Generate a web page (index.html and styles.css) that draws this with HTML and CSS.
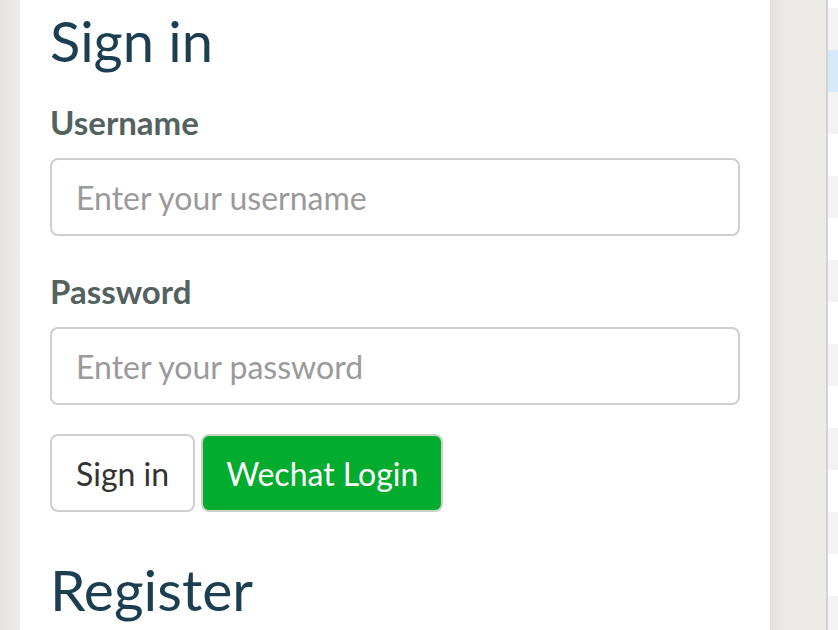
FILE: index.html
```html
<!DOCTYPE html>
<html lang="en">
<head>
    <meta charset="UTF-8">
    <meta name="viewport" content="width=device-width, initial-scale=1.0">
    <title>Sign in</title>
    <link rel="stylesheet" href="styles.css">
</head>
<body>
    <div class="layout">
        <div class="side-left"></div>

        <main class="panel">
            <h2 class="title">Sign in</h2>
            <form class="login-form">
                <label class="field-label" for="username">Username</label>
                <input type="text" id="username" class="field-input" placeholder="Enter your username">

                <label class="field-label field-label-second" for="password">Password</label>
                <input type="password" id="password" class="field-input" placeholder="Enter your password">

                <div class="actions">
                    <button type="submit" class="btn">Sign in</button>
                    <button type="button" class="btn btn-wechat">Wechat Login</button>
                </div>
            </form>
            <h2 class="title title-register">Register</h2>
        </main>

        <div class="side-right"></div>

        <!-- liste en arrière-plan -->
        <div class="list-strip">
            <div class="row row-top"></div>
            <div class="row odd"></div>
            <div class="row active"></div>
            <div class="row odd"></div>
            <div class="row"></div>
            <div class="row odd"></div>
            <div class="row"></div>
            <div class="row odd"></div>
            <div class="row"></div>
            <div class="row odd"></div>
            <div class="row"></div>
            <div class="row odd"></div>
            <div class="row"></div>
            <div class="row odd"></div>
            <div class="row"></div>
            <div class="row odd"></div>
        </div>
    </div>
</body>
</html>
```

FILE: styles.css
```css
body {
    margin: 0;
    padding: 0;
    font-family: Lato, "Open Sans", sans-serif;
    background: #fff;
    height: 630px;
    overflow: hidden;
}

.layout {
    display: grid;
    grid-template-columns: 20px 750px 56px 2px 10px;
    height: 630px;
}

.side-left {
    background: linear-gradient(to right, #e6e4e0, #eeedea);
}

.panel {
    background: #fff;
    padding: 7px 30px 0;
}

.side-right {
    background: linear-gradient(to right, #e3e2de, #ebeae7 30%, #ebeae7);
    border-right: 2px solid #d3d2d0;
    grid-column: span 2;
}

.title {
    margin: 0;
    font-size: 56px;
    font-weight: 400;
    line-height: 67px;
    color: #1b3f51;
}

.title-register {
    margin-top: 44px;
    font-size: 57px;
}

.login-form {
    display: flex;
    flex-direction: column;
}

.field-label {
    display: block;
    margin: 30px 0 18px;
    font-size: 33px;
    font-weight: 700;
    line-height: 36px;
    color: #54625f;
}

.field-label-second {
    margin-top: 37px;
}

.field-input {
    box-sizing: border-box;
    width: 100%;
    height: 78px;
    padding: 0 24px;
    border: 2px solid #cfcfcf;
    border-radius: 8px;
    font-family: Lato, "Open Sans", sans-serif;
    font-size: 32px;
    color: #333;
    background: #fff;
}

.field-input::placeholder {
    color: #9a9a9a;
}

.field-input:focus {
    outline: none;
}

.actions {
    display: flex;
    gap: 6px;
    margin-top: 29px;
}

.btn {
    box-sizing: border-box;
    height: 78px;
    padding: 0 24px;
    border: 2px solid #cfcfcf;
    border-radius: 8px;
    background: #fff;
    color: #333;
    font-family: Lato, "Open Sans", sans-serif;
    font-size: 32px;
    cursor: pointer;
}

.btn-wechat {
    padding: 0 23px;
    background: #02ac2f;
    color: #fff;
    border-color: #c9d3c9;
}

.list-strip {
    display: flex;
    flex-direction: column;
    overflow: hidden;
}

.row {
    flex: 0 0 42px;
    background: #fff;
}

.row-top {
    flex-basis: 8px;
}

.row.odd {
    background: #f3f3f3;
}

.row.active {
    background: #d7eafb;
}
```
